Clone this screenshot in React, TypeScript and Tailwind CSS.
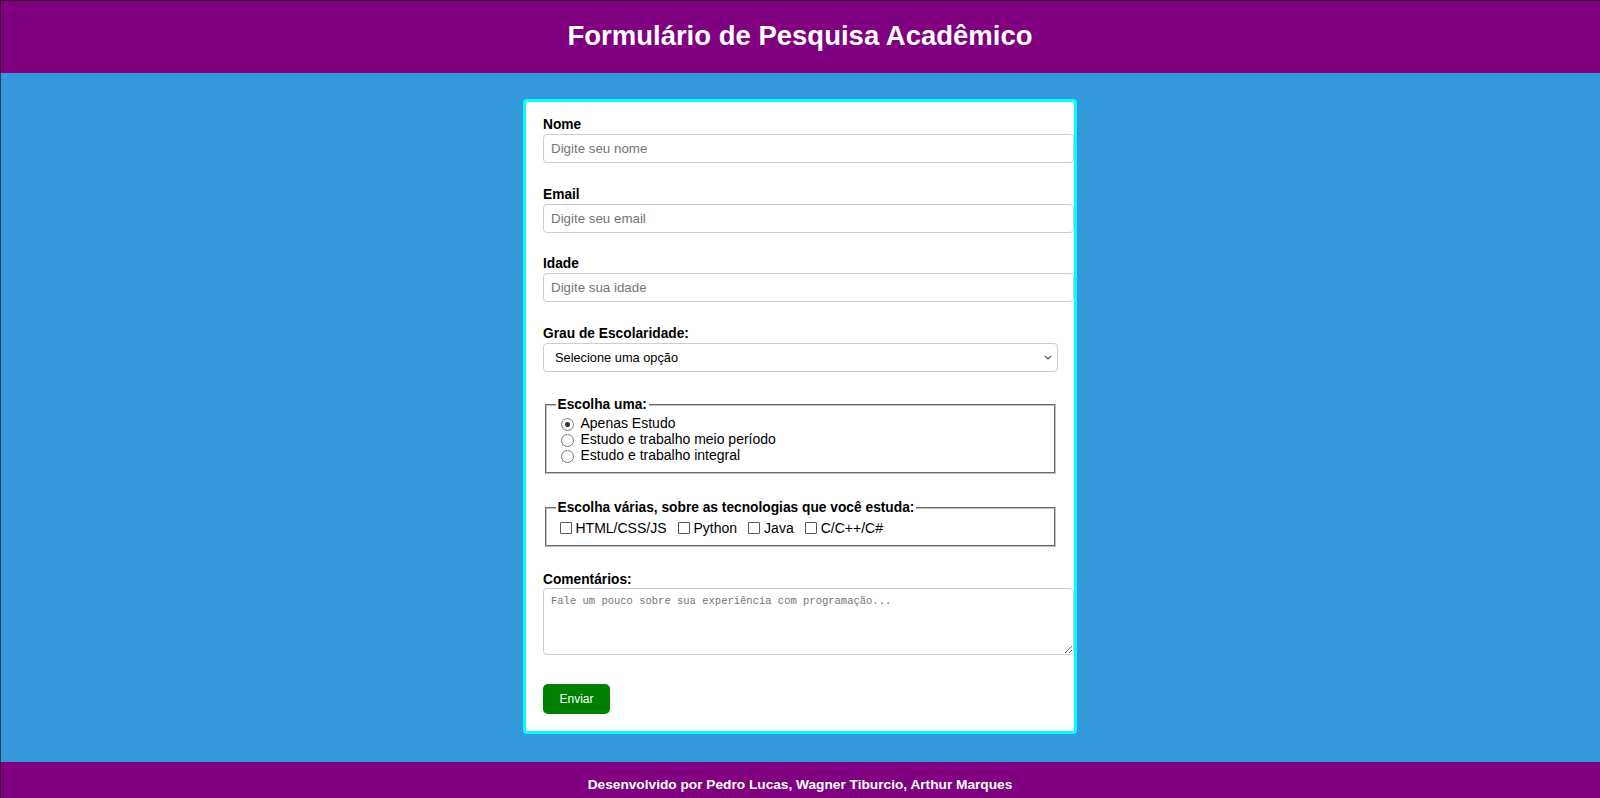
import React from "react";

function Field({ label, placeholder }: { label: string; placeholder: string }) {
  return (
    <div className="mb-[23.5px]">
      <label className="block text-[13.75px] font-bold leading-[16px] text-black">{label}</label>
      <input
        className="mt-[1px] block w-[531px] h-[29px] border border-[#cccccc] rounded-[4px] px-[7px] text-[13.33px] text-black placeholder:text-[#757575] outline-none bg-white"
        placeholder={placeholder}
      />
    </div>
  );
}

function Radio({ checked, label }: { checked?: boolean; label: string }) {
  return (
    <div className="flex items-center h-[16.25px] text-[14px] leading-[16px] text-black">
      <span className="ml-[5px] mr-[7px] mt-[3px] w-[13px] h-[13px] rounded-full border border-[#767676] bg-white flex items-center justify-center shrink-0">
        {checked ? <span className="w-[5px] h-[5px] rounded-full bg-[#333333]" /> : null}
      </span>
      <span>{label}</span>
    </div>
  );
}

function Check({ label }: { label: string }) {
  return (
    <span className="flex items-center mr-[7px]">
      <span className="ml-[4px] mr-[4px] w-[12px] h-[12px] border border-[#555555] rounded-[1px] bg-white shrink-0" />
      <span>{label}</span>
    </span>
  );
}

export default function App() {
  return (
    <div className="relative min-h-screen bg-[#3498db] font-['Liberation_Sans',Arial,sans-serif]">
      <header className="h-[72.5px] bg-[#800080] flex items-center justify-center">
        <h1 className="text-[27.5px] font-bold text-white leading-[32px]">Formulário de Pesquisa Acadêmico</h1>
      </header>

      <main className="pt-[26.5px] pb-[28px] flex justify-center">
        <form className="w-[554px] bg-white border-[3px] border-[#00ffff] rounded-[4px] pt-[15px] pb-[16.3px] pl-[17px] pr-[16px]">
          <Field label="Nome" placeholder="Digite seu nome" />
          <Field label="Email" placeholder="Digite seu email" />
          <Field label="Idade" placeholder="Digite sua idade" />

          <div className="mb-[25.5px]">
            <label className="block text-[13.75px] font-bold leading-[16px] text-black">Grau de Escolaridade:</label>
            <div className="relative mt-[1.5px] w-[515px]">
              <select className="block w-[515px] h-[28.5px] appearance-none border border-[#cccccc] rounded-[4px] pl-[11px] pr-[24px] text-[12.8px] text-black bg-white outline-none">
                <option>Selecione uma opção</option>
              </select>
              <svg
                className="absolute right-[6px] top-[12px] pointer-events-none"
                width="8"
                height="5"
                viewBox="0 0 8 5"
                fill="none"
              >
                <path d="M0.8 0.8 L4 4 L7.2 0.8" stroke="#555555" strokeWidth="1.2" />
              </svg>
            </div>
          </div>

          <fieldset className="mx-[2px] mb-[26.5px] border-2 [border-style:groove] border-[#c0c0c0] px-[8.5px] pt-[1.5px] pb-[8.25px]">
            <legend className="px-[2px] text-[13.75px] font-bold leading-[16px] text-black">Escolha uma:</legend>
            <Radio checked label="Apenas Estudo" />
            <Radio label="Estudo e trabalho meio período" />
            <Radio label="Estudo e trabalho integral" />
          </fieldset>

          <fieldset className="mx-[2px] mb-[24.6px] border-2 [border-style:groove] border-[#c0c0c0] px-[8.5px] pt-[2px] pb-[7px]">
            <legend className="px-[2px] text-[13.75px] font-bold leading-[16px] text-black">
              Escolha várias, sobre as tecnologias que você estuda:
            </legend>
            <div className="flex items-center h-[20px] text-[14px] leading-[16px] text-black">
              <Check label="HTML/CSS/JS" />
              <Check label="Python" />
              <Check label="Java" />
              <Check label="C/C++/C#" />
            </div>
          </fieldset>

          <div>
            <label className="block text-[13.75px] font-bold leading-[16px] text-black">Comentários:</label>
            <textarea
              className="block w-[531px] h-[67px] border border-[#cccccc] rounded-[4px] px-[7px] py-[6px] font-['Liberation_Mono',monospace] text-[10.5px] leading-[13px] text-black placeholder:text-[#757575] outline-none bg-white"
              placeholder="Fale um pouco sobre sua experiência com programação..."
            />
          </div>

          <button
            type="button"
            className="mt-[29.7px] block w-[67px] h-[30px] bg-[#008000] rounded-[5px] text-white text-[12px]"
          >
            Enviar
          </button>
        </form>
      </main>

      <footer className="bg-[#800080] py-[15px] text-center text-white text-[13.7px] font-bold leading-[16px]">
        Desenvolvido por Pedro Lucas, Wagner Tiburcio, Arthur Marques
      </footer>

      <div className="pointer-events-none absolute inset-0 border-t border-l border-black/60" />
    </div>
  );
}
